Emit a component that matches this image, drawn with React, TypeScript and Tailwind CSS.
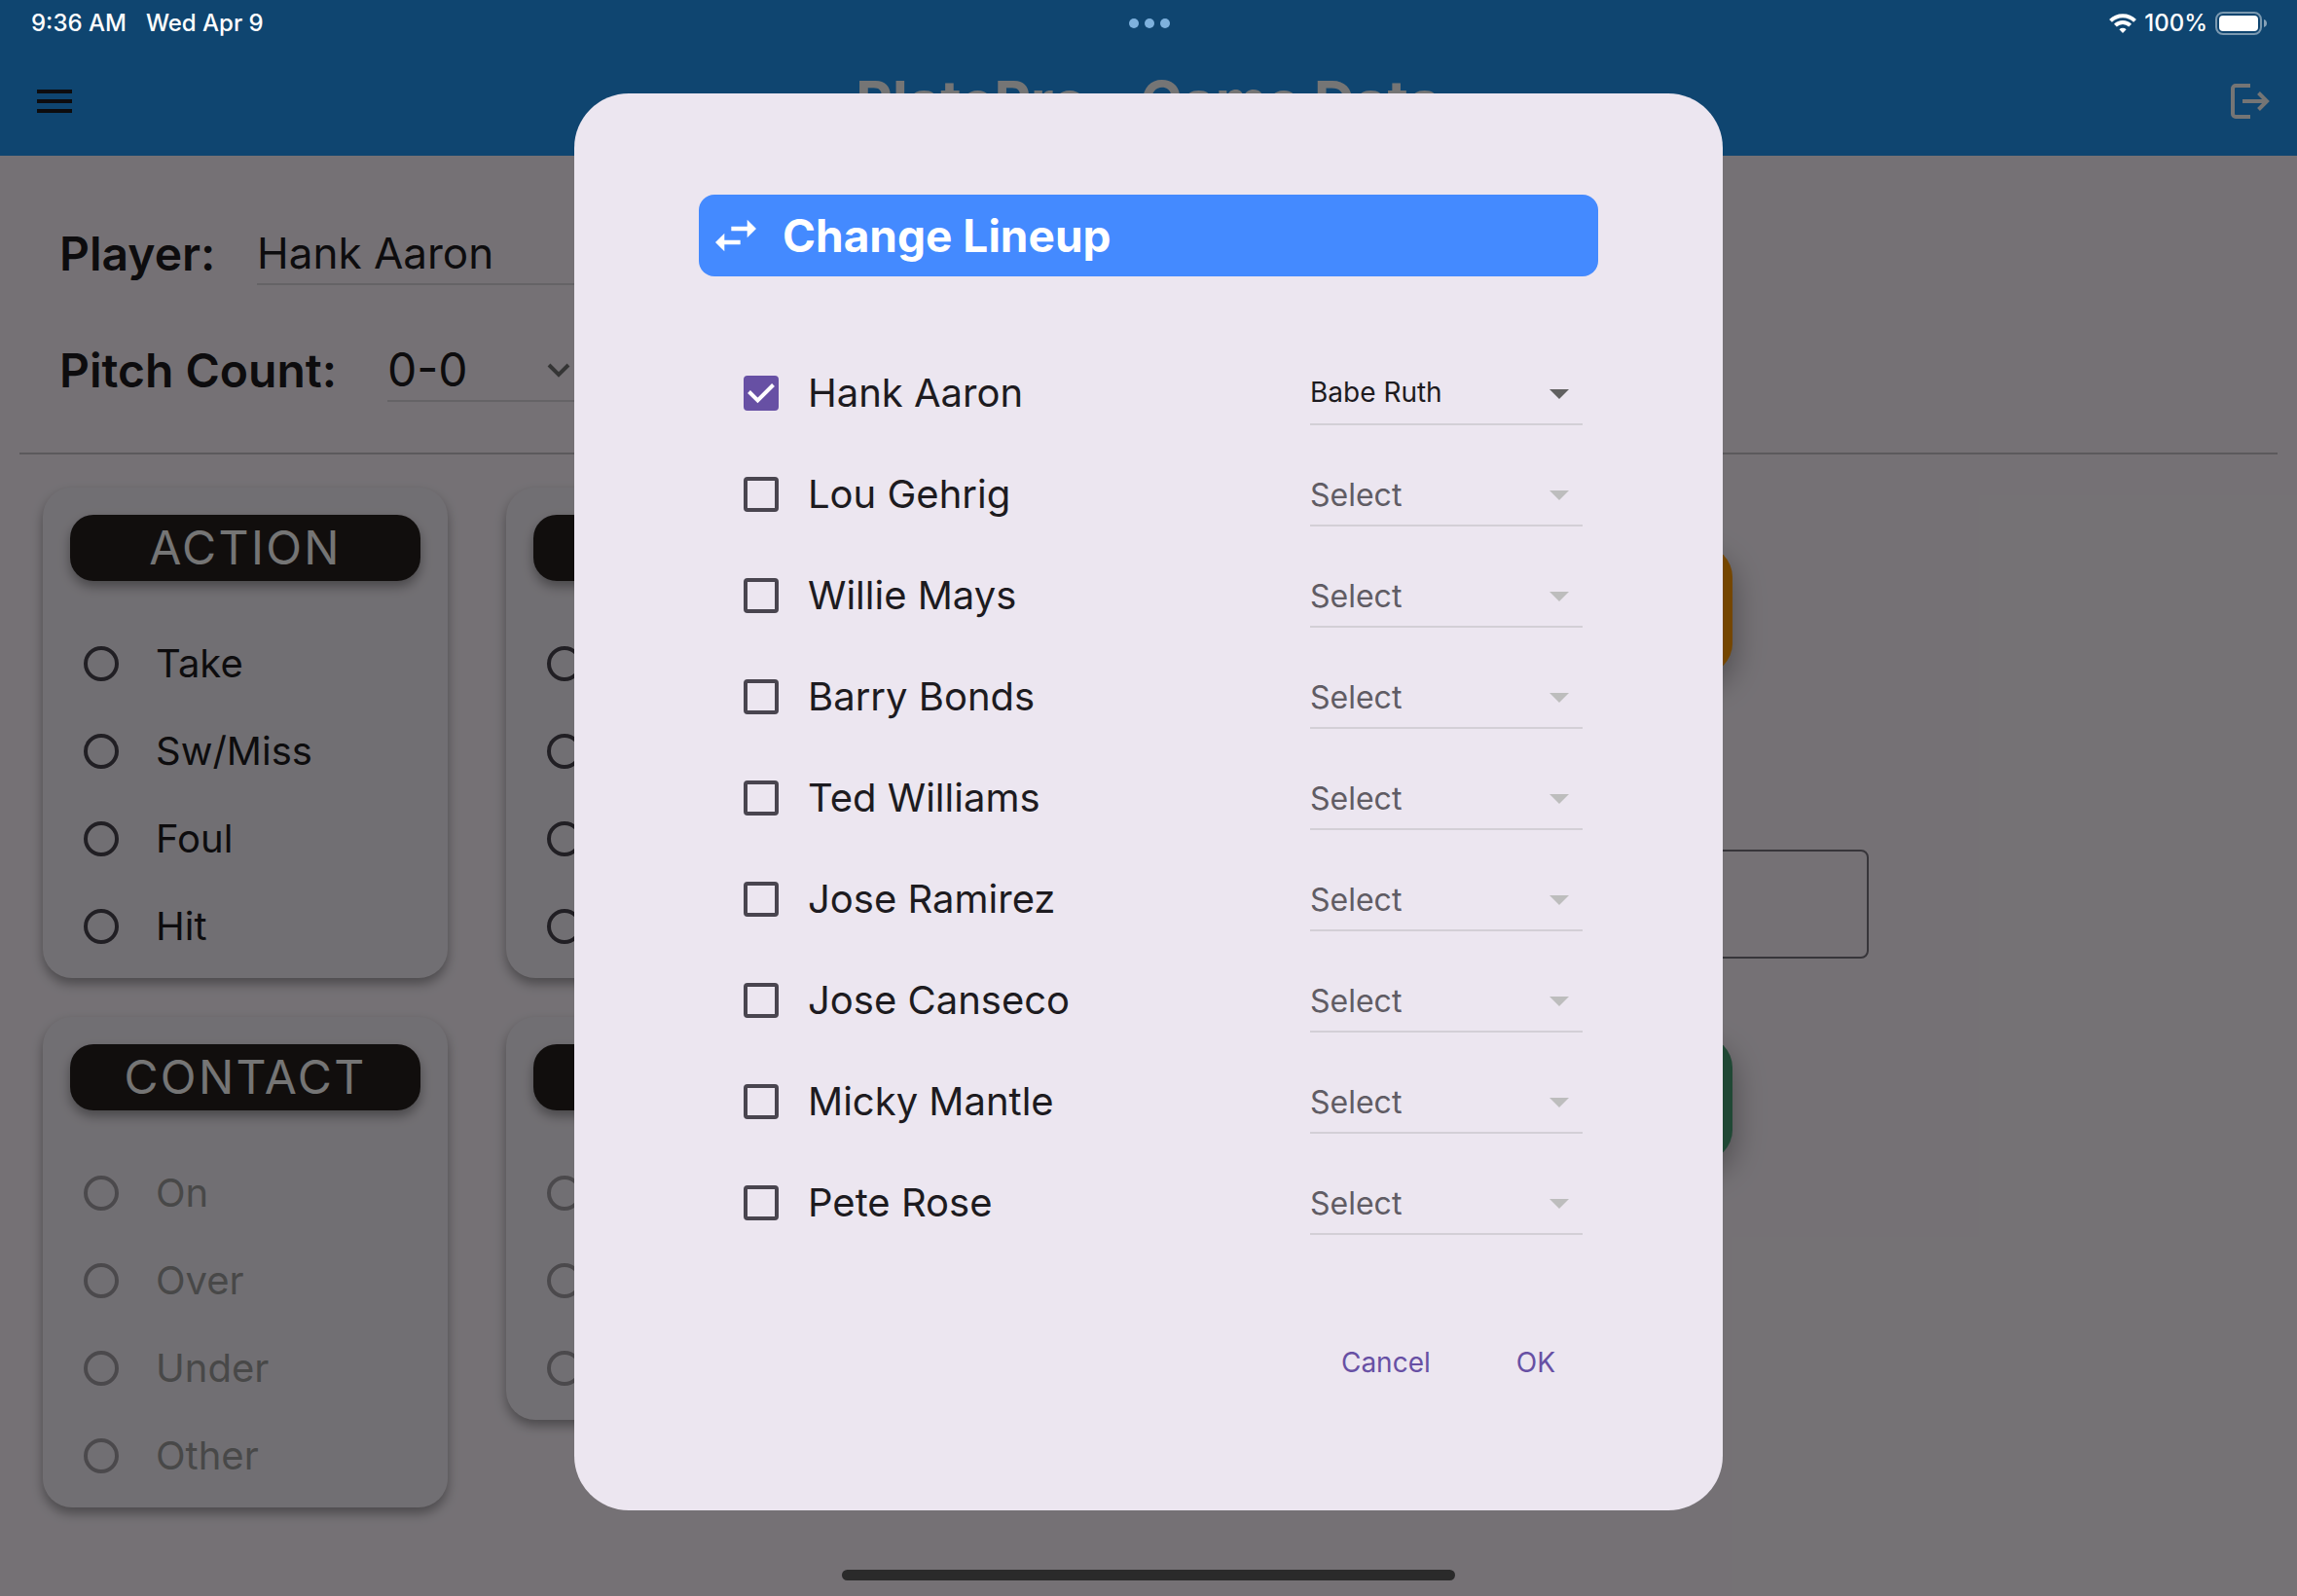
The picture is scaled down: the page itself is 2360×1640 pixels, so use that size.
import { useState } from "react";
import type { ReactElement } from "react";
import { MdSwapHoriz } from "react-icons/md";

interface OptionCardProps {
  id: string;
  title?: string;
  options: readonly string[];
  showLabels?: boolean;
  disabled?: boolean;
}

interface LineupRowProps {
  player: string;
  substitute: string;
  checked: boolean;
  onToggle: () => void;
}

const STARTERS = [
  "Hank Aaron",
  "Lou Gehrig",
  "Willie Mays",
  "Barry Bonds",
  "Ted Williams",
  "Jose Ramirez",
  "Jose Canseco",
  "Micky Mantle",
  "Pete Rose",
] as const;

function StatusBar(): ReactElement {
  return (
    <div className="pointer-events-none absolute inset-x-0 top-0 z-20 grid h-12 grid-cols-3 items-center pr-[30px] pl-8 text-[24px] leading-none font-medium text-white">
      <div className="flex gap-5">
        <span>9:36 AM</span>
        <span>Wed Apr 9</span>
      </div>
      <div className="flex justify-center gap-1.5">
        <span className="size-2.5 rounded-full bg-[#7eb1dd]" />
        <span className="size-2.5 rounded-full bg-[#7eb1dd]" />
        <span className="size-2.5 rounded-full bg-[#7eb1dd]" />
      </div>
      <div className="flex items-center justify-end gap-2">
        <svg className="h-5 w-7" viewBox="0 0 28 20" fill="none" stroke="currentColor" strokeWidth="4">
          <path d="M1.5 7.4a17.7 17.7 0 0 1 25 0" />
          <path d="M6.4 12.2a10.8 10.8 0 0 1 15.2 0" />
          <path d="M14 20l-3.6-3.7a5.2 5.2 0 0 1 7.2 0z" fill="currentColor" stroke="none" />
        </svg>
        <span>100%</span>
        <svg className="h-6 w-[54px]" viewBox="0 0 54 24" fill="none">
          <rect x="1" y="1" width="46" height="22" rx="7" stroke="white" strokeOpacity="0.45" strokeWidth="2" />
          <rect x="4" y="4" width="40" height="16" rx="4" fill="white" />
          <path d="M50 8c2 .6 3 2.200 3 4s-1 3.400-3 4z" fill="white" fillOpacity="0.5" />
        </svg>
      </div>
    </div>
  );
}

function AppHeader(): ReactElement {
  return (
    <header className="flex items-center justify-between bg-[#2196f3] px-7 pt-12">
      <button aria-label="Menu" className="flex h-28 w-14 items-center justify-center" type="button">
        <svg className="h-6 w-9" viewBox="0 0 36 24" fill="#1d1b20">
          <path d="M0 0h36v4H0zM0 10h36v4H0zM0 20h36v4H0z" />
        </svg>
      </button>
      <h1 className="text-[58px] leading-none font-bold text-white">PlatePro - Game Data</h1>
      <button aria-label="Log out" className="flex h-28 w-14 items-center justify-end text-white" type="button">
        <svg className="h-9 w-10" viewBox="0 0 40 36" fill="none" stroke="currentColor" strokeWidth="4">
          <path d="M20 2H5a3 3 0 0 0-3 3v26a3 3 0 0 0 3 3h15" />
          <path d="M12 18h25M28.500 9.500l8.500 8.500-8.500 8.500" />
        </svg>
      </button>
    </header>
  );
}

function OptionCard({ id, title, options, showLabels = true, disabled = false }: OptionCardProps): ReactElement {
  return (
    <section className="w-[416px] rounded-[30px] bg-[#f7f2fa] px-7 pt-7 pb-2 shadow-[0_6px_12px_rgba(0,0,0,0.35)]">
      <h2 className="flex h-[68px] items-center justify-center rounded-3xl bg-[#27201e] text-[48px] leading-none tracking-wider text-white shadow-[0_6px_12px_rgba(0,0,0,0.35)]">
        {title}
      </h2>
      <div className="mt-10">
        {options.map((option) => (
          <label
            className={`flex h-[90px] items-center gap-[38px] px-3.5 text-[40px] leading-none ${disabled ? "text-[#9e9e9e]" : "text-[#1d1b20]"}`}
            key={option}
          >
            <input
              aria-label={option}
              className="size-9 appearance-none rounded-full border-4 border-[#49454f] disabled:border-[#a4a0a7]"
              disabled={disabled}
              name={id}
              type="radio"
            />
            {showLabels ? option : null}
          </label>
        ))}
      </div>
    </section>
  );
}

function LineupRow({ player, substitute, checked, onToggle }: LineupRowProps): ReactElement {
  return (
    <li className="flex h-26 items-center justify-between pr-4 pl-[46px]">
      <label className="flex items-center gap-[30px] text-[40px] leading-none text-[#1d1b20]">
        <span className="grid size-9 place-items-center">
          <input
            checked={checked}
            className="col-start-1 row-start-1 size-9 appearance-none rounded-[4px] border-4 border-[#49454f] checked:border-[#6750a4] checked:bg-[#6750a4]"
            onChange={onToggle}
            type="checkbox"
          />
          {checked ? (
            <svg
              className="pointer-events-none col-start-1 row-start-1 size-9"
              viewBox="0 0 36 36"
              fill="none"
              stroke="white"
              strokeWidth="4"
            >
              <path d="M5.500 16.500l9 9L30.500 9.500" />
            </svg>
          ) : null}
        </span>
        {player}
      </label>
      <div className="grid w-[280px] items-center">
        <select
          aria-label={`Substitute for ${player}`}
          className="col-start-1 row-start-1 h-[66px] w-full appearance-none border-b-2 border-[#d3cfd6] text-[28px] text-[#1d1b20] disabled:pt-1 disabled:text-[32px] disabled:text-[#605c64] disabled:opacity-100"
          defaultValue={substitute}
          disabled={!checked}
        >
          <option>{substitute}</option>
        </select>
        <svg
          className={`pointer-events-none col-start-1 row-start-1 mt-0.5 mr-3.5 h-2.5 w-5 justify-self-end ${checked ? "text-[#616161]" : "text-[#bdbdbd]"}`}
          viewBox="0 0 20 10"
          fill="currentColor"
        >
          <path d="M0 0h20L10 10z" />
        </svg>
      </div>
    </li>
  );
}

function LineupDialog(): ReactElement {
  const [selected, setSelected] = useState<readonly string[]>(["Hank Aaron"]);

  const toggle = (player: string) => {
    setSelected((current) =>
      current.includes(player) ? current.filter((name) => name !== player) : [...current, player],
    );
  };

  return (
    <div className="absolute inset-0 z-10 flex items-center justify-center bg-black/54 pt-12 pb-10">
      <section
        aria-labelledby="lineup-title"
        aria-modal="true"
        className="w-1/2 rounded-[56px] bg-[#ece6f0] px-32 pt-26 pb-28"
        role="dialog"
      >
        <header className="flex h-21 items-center gap-5 rounded-2xl bg-[#448aff] px-2.5 text-white">
          <MdSwapHoriz className="size-14" />
          <h2 className="text-[46px] leading-none font-bold" id="lineup-title">
            Change Lineup
          </h2>
        </header>
        <ul className="mt-17">
          {STARTERS.map((player) => (
            <LineupRow
              checked={selected.includes(player)}
              key={player}
              onToggle={() => toggle(player)}
              player={player}
              substitute={player === "Hank Aaron" ? "Babe Ruth" : "Select"}
            />
          ))}
        </ul>
        <footer className="mt-18 flex justify-end gap-4 pr-2 text-[28px] text-[#6750a4]">
          <button className="h-20 px-9" type="button">
            Cancel
          </button>
          <button className="h-20 px-9" type="button">
            OK
          </button>
        </footer>
      </section>
    </div>
  );
}

export default function App(): ReactElement {
  return (
    <div className="relative min-h-screen overflow-hidden bg-[#fef7ff] font-[Inter,'Liberation_Sans',sans-serif] text-[#1d1b20]">
      <StatusBar />
      <AppHeader />

      <main className="px-5 pt-[69px]">
        <div className="grid gap-14 px-[41px]">
          <div className="flex items-center">
            <label className="w-[203px] text-[48px] leading-none font-semibold" htmlFor="player">
              Player:
            </label>
            <input
              className="h-16 w-[400px] border-b-2 border-[#ddd8de] text-[44px]"
              defaultValue="Hank Aaron"
              id="player"
              type="text"
            />
          </div>
          <div className="flex items-center">
            <label className="w-[337px] text-[48px] leading-none font-semibold" htmlFor="pitch-count">
              Pitch Count:
            </label>
            <div className="grid w-[200px] items-center">
              <select
                className="col-start-1 row-start-1 h-16 appearance-none border-b-2 border-[#ddd8de] text-[48px] leading-none"
                id="pitch-count"
              >
                <option>0-0</option>
              </select>
              <svg
                className="pointer-events-none col-start-1 row-start-1 mr-3 h-4 w-6 justify-self-end"
                viewBox="0 0 24 16"
                fill="none"
                stroke="#757575"
                strokeWidth="4"
              >
                <path d="M2 2l10 10L22 2" />
              </svg>
            </div>
          </div>
        </div>

        <hr className="mt-13 border-t-2 border-[#c6c2c8]" />

        <div className="mt-[34px] flex gap-15 px-6">
          <div className="grid content-start gap-10">
            <OptionCard id="action" options={["Take", "Sw/Miss", "Foul", "Hit"]} title="ACTION" />
            <OptionCard disabled id="contact" options={["On", "Over", "Under", "Other"]} title="CONTACT" />
          </div>
          <div className="grid content-start gap-10">
            <OptionCard id="zone" options={["1", "2", "3", "4"]} showLabels={false} />
            <OptionCard disabled id="result" options={["1", "2", "3"]} showLabels={false} />
          </div>
          <div className="mr-[396px] ml-auto flex w-[448px] flex-col pt-15">
            <button
              aria-label="Undo"
              className="h-33 w-[308px] rounded-[32px] bg-[#ff9800] shadow-[0_12px_32px_rgba(0,0,0,0.35)]"
              type="button"
            />
            <input
              aria-label="Notes"
              className="mt-45 h-28 w-full rounded-lg border-2 border-[#79747e]"
              type="text"
            />
            <button
              aria-label="Save"
              className="mt-20 h-32 w-[308px] rounded-[32px] bg-[#469d75] shadow-[0_12px_32px_rgba(0,0,0,0.35)]"
              type="button"
            />
          </div>
        </div>
      </main>

      <LineupDialog />
      <div className="pointer-events-none absolute inset-x-0 bottom-4 z-20 flex justify-center">
        <div className="h-[11px] w-[630px] rounded-full bg-[#2a2a2a]" />
      </div>
    </div>
  );
}
